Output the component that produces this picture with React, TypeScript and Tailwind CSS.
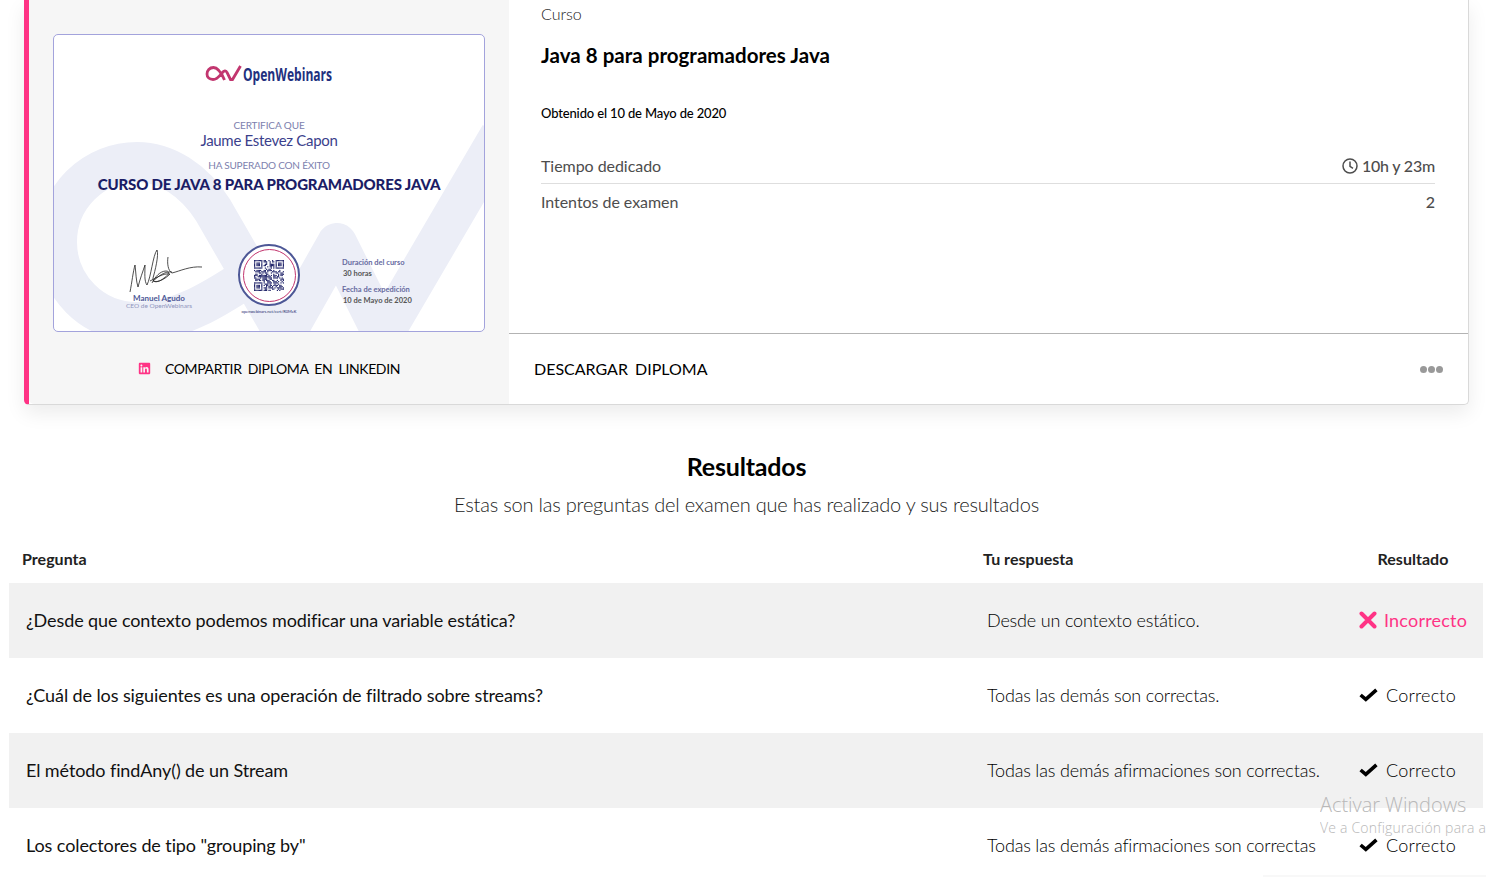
import React from "react";
import { FaLinkedin } from "react-icons/fa";

const rows = [
  ["¿Desde que contexto podemos modificar una variable estática?", "Desde un contexto estático.", false, true],
  ["¿Cuál de los siguientes es una operación de filtrado sobre streams?", "Todas las demás son correctas.", true, false],
  ["El método findAny() de un Stream", "Todas las demás afirmaciones son correctas.", true, true],
  ['Los colectores de tipo "grouping by"', "Todas las demás afirmaciones son correctas", true, false],
] as const;

function Check() {
  return (
    <svg width="19" height="14" viewBox="0 0 19 14" className="shrink-0">
      <path d="M1.6 7 L6.8 11.4 L17.4 1.8" fill="none" stroke="#000" strokeWidth="3.6" />
    </svg>
  );
}

function Cross() {
  return (
    <svg width="18" height="18" viewBox="0 0 18 18" className="shrink-0">
      <path d="M2.5 2.5 L15.5 15.5 M15.5 2.5 L2.5 15.5" fill="none" stroke="#ff3385" strokeWidth="4" strokeLinecap="round" />
    </svg>
  );
}

function Qr() {
  const n = 25;
  const cells: React.ReactNode[] = [];
  const finder = (x: number, y: number) => {
    const inX = x >= 0 && x < 7;
    const inY = y >= 0 && y < 7;
    if (!inX || !inY) return null;
    const edge = x === 0 || x === 6 || y === 0 || y === 6;
    const core = x >= 2 && x <= 4 && y >= 2 && y <= 4;
    return edge || core;
  };
  for (let y = 0; y < n; y++) {
    for (let x = 0; x < n; x++) {
      let on = finder(x, y);
      if (on === null) on = finder(x - (n - 7), y);
      if (on === null) on = finder(x, y - (n - 7));
      if (on === null) {
        const nearFinder = (x < 8 && y < 8) || (x >= n - 8 && y < 8) || (x < 8 && y >= n - 8);
        const h = Math.sin(x * 12.9898 + y * 78.233) * 43758.5453;
        on = !nearFinder && h - Math.floor(h) < 0.56;
      }
      if (on) cells.push(<rect key={x + "-" + y} x={x} y={y} width="1" height="1" />);
    }
  }
  return (
    <svg width="30" height="31" viewBox="0 0 25 25" preserveAspectRatio="none" fill="#23276b">
      {cells}
    </svg>
  );
}

function Certificate() {
  return (
    <div className="relative w-[432px] h-[298px] bg-white border border-[#a3a3dc] rounded-[5px] overflow-hidden text-center">
      <svg className="absolute left-0 top-0" width="430" height="296" viewBox="0 0 430 296">
        <path
          d="M446 100 L329 300 L283 208 L231 300 L159 175 C140 145 112 127 83 127 A80 80 0 1 0 83 287 C125 287 160 265 205 235"
          fill="none"
          stroke="#eceef7"
          strokeWidth="40"
          strokeLinejoin="round"
        />
      </svg>
      <div className="relative flex flex-col items-center">
        <div className="flex items-center h-[26px] mt-[26px] gap-[1px]">
          <svg width="37" height="20" viewBox="0 0 37 20">
            <path d="M19.5 16 C16 8 13 3.5 8.5 3.5 C4.5 3.5 2 6.5 2 10 C2 13.5 4.5 15.5 8 15.5 C12 15.5 14.5 12 17 9 C19 6.5 21 6 22 8.5 L25.5 15.5 L27.5 15.5 L35.5 2" fill="none" stroke="#c2366f" strokeWidth="2.8" />
          </svg>
          <span className="font-['Open_Sans'] font-bold text-[#22307e] text-[18px] leading-none scale-x-[0.67] origin-left w-[90px] whitespace-nowrap">OpenWebinars</span>
        </div>
        <div className="mt-[31px] text-[10px] leading-[14px] text-[#7d7fae] tracking-[-0.1px]">CERTIFICA QUE</div>
        <div className="mt-[-1px] text-[15px] leading-[18px] text-[#3b3f8c] tracking-[-0.3px]">Jaume Estevez Capon</div>
        <div className="mt-[10px] text-[10px] leading-[13px] text-[#7d7fae] tracking-[-0.2px]">HA SUPERADO CON ÉXITO</div>
        <div className="mt-[3px] text-[15px] leading-[18px] font-black text-[#1b1d66] tracking-[-0.15px] whitespace-nowrap">CURSO DE JAVA 8 PARA PROGRAMADORES JAVA</div>
      </div>
      <div className="absolute left-[74px] top-[212px]">
        <svg width="76" height="48" viewBox="0 0 76 48" fill="none" stroke="#222" strokeWidth="0.8">
          <path d="M2 45 C4 35 5 25 7 18 C8 26 8 34 10 40 C12 32 15 24 17 18 C17 26 16 34 19 38 C23 30 25 8 29 3 C31 8 27 24 25 31 C24 36 30 36 36 31 C41 28 42 24 38 24 C32 24 27 30 24 36" />
          <path d="M40 10 C39 16 40 24 44 26 C52 24 62 19 74 20" />
          <path d="M22 34 C28 31 35 26 42 27 C37 32 30 36 25 34 C30 30 36 24 44 25" />
        </svg>
      </div>
      <div className="absolute left-[60px] top-[258px] w-[90px] text-[8px] leading-[10px] font-bold text-[#4d5796]">Manuel Agudo</div>
      <div className="absolute left-[50px] top-[267px] w-[110px] text-[6.5px] leading-[8px] text-[#8f95bd]">CEO de OpenWebinars</div>
      <div className="absolute left-[184px] top-[209px] w-[62px] h-[62px] rounded-full border-2 border-[#4d5796] bg-white flex items-center justify-center">
        <div className="w-[53px] h-[53px] rounded-full border-[1.5px] border-[#c2366f] flex items-center justify-center">
          <Qr />
        </div>
      </div>
      <div className="absolute left-[179px] top-[274px] w-[72px] text-[4px] leading-[5px] text-[#23276b] whitespace-nowrap">openwebinars.net/cert/R0MeK</div>
      <div className="absolute left-[288px] top-[223px] text-left text-[7.5px] font-bold leading-[10.5px] text-[#666a9f] whitespace-nowrap">
        <div>Duración del curso</div>
        <div className="pl-[1px] text-[#555]">30 horas</div>
        <div className="mt-[6px]">Fecha de expedición</div>
        <div className="pl-[1px] text-[#555]">10 de Mayo de 2020</div>
      </div>
    </div>
  );
}

export default function App() {
  return (
    <div className="relative h-[877px] overflow-hidden bg-white font-['Lato',sans-serif]">
      <div className="ml-[24px] w-[1445px] h-[405px] flex border-l-[5px] border-[#ff3385] border-b border-r border-b-[#d9d9d9] border-r-[#d9d9d9] rounded-b-[5px] shadow-[0_8px_20px_rgba(0,0,0,0.08)] bg-white">
        <div className="w-[480px] h-full bg-[#f6f6f6] flex flex-col items-center rounded-bl-[5px]">
          <div className="pt-[34px]">
            <Certificate />
          </div>
          <div className="mt-[28px] flex items-center gap-[14px] text-[14px] leading-[17px] font-normal text-black tracking-[-0.37px] [word-spacing:3px]">
            <FaLinkedin size={13} color="#ff3385" />
            COMPARTIR DIPLOMA EN LINKEDIN
          </div>
        </div>
        <div className="flex-1 flex flex-col">
          <div className="h-[334px] border-b border-[#b3b3b3] pl-[32px] pr-[33px] flex flex-col">
            <div className="mt-[4px] text-[16px] leading-[19px] font-light text-[#222]">Curso</div>
            <div className="mt-[18px] text-[20.5px] leading-[28px] font-bold text-black tracking-[0.03px]">Java 8 para programadores Java</div>
            <div className="mt-[34px] text-[13px] leading-[20px] font-medium text-black tracking-[-0.15px]">Obtenido el 10 de Mayo de 2020</div>
            <div className="mt-[26px] h-[35px] flex justify-between items-center text-[16px] text-[#4d4d4d] border-b border-[#dedede]">
              <span className="tracking-[-0.05px]">Tiempo dedicado</span>
              <span className="flex items-center gap-[4px] font-medium tracking-[-0.2px]">
                <svg width="16" height="16" viewBox="0 0 16 16" fill="none" stroke="#4d4d4d" strokeWidth="1.5">
                  <circle cx="8" cy="8" r="7" />
                  <path d="M8 3.6V8.4L11 10.4" />
                </svg>
                10h y 23m
              </span>
            </div>
            <div className="h-[36px] flex justify-between items-center text-[16px] text-[#4d4d4d]">
              <span className="tracking-[-0.05px]">Intentos de examen</span>
              <span className="font-medium">2</span>
            </div>
          </div>
          <div className="flex-1 flex items-center justify-between pl-[25px] pr-[25px] text-[16px] font-normal text-black [word-spacing:3px]">
            <span>DESCARGAR DIPLOMA</span>
            <span className="flex gap-[1px]">
              <i className="w-[7px] h-[7px] rounded-full bg-[#999]" />
              <i className="w-[7px] h-[7px] rounded-full bg-[#999]" />
              <i className="w-[7px] h-[7px] rounded-full bg-[#999]" />
            </span>
          </div>
        </div>
      </div>

      <div className="ml-[24px] w-[1445px] mt-[44px] text-center">
        <h2 className="text-[25px] leading-[34px] font-bold text-black tracking-[-0.2px]">Resultados</h2>
        <p className="mt-[7px] text-[20px] leading-[28px] font-light text-[#222] tracking-[-0.2px]">Estas son las preguntas del examen que has realizado y sus resultados</p>
      </div>

      <div className="ml-[9px] w-[1474px] mt-[28px]">
        <div className="h-[37px] pb-[11px] flex items-center text-[16px] font-bold text-[#222] tracking-[0.03px]">
          <div className="w-[974px] pl-[13px]">Pregunta</div>
          <div className="w-[394.5px]">Tu respuesta</div>
          <div>Resultado</div>
        </div>
        {rows.map(([q, a, ok, shaded]) => (
          <div key={q} className={`h-[75px] pb-[2px] flex items-center text-[18px] leading-[20px] ${shaded ? "bg-[#f1f1f1]" : "bg-white"}`}>
            <div className="w-[978px] pl-[17px] text-[#111] tracking-[-0.1px]">{q}</div>
            <div className="w-[372px] font-light text-black tracking-[-0.17px]">{a}</div>
            {ok ? (
              <div className="flex items-center gap-[8px] font-light text-black tracking-[0.2px]"><Check />Correcto</div>
            ) : (
              <div className="flex items-center gap-[7px] font-normal text-[#ff3385] tracking-[0.2px]"><Cross />Incorrecto</div>
            )}
          </div>
        ))}
      </div>

      <div className="absolute left-[1320px] top-[791px] w-[166px] overflow-hidden whitespace-nowrap font-['Open_Sans'] font-light text-[#b8b8b8] pointer-events-none">
        <div className="text-[20px] leading-[27px] tracking-[-0.05px]">Activar Windows</div>
        <div className="mt-[2px] text-[14px] leading-[16px] tracking-[0.2px]">Ve a Configuración para a</div>
      </div>
      <div className="absolute left-[1263px] right-0 bottom-0 h-[2px] bg-[#f8f8f8]" />
    </div>
  );
}
